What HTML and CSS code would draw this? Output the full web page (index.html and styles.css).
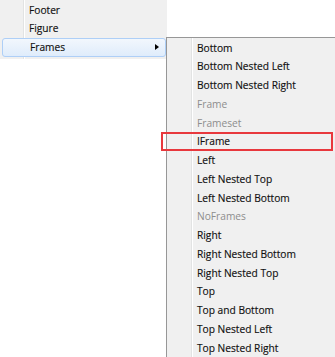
FILE: index.html
```html
<!DOCTYPE html>
<html>
<head>
<meta charset="utf-8">
<link rel="stylesheet" href="styles.css">
</head>
<body>
<div class="stage">
  <div class="menu main">
    <div class="item">Footer</div>
    <div class="item">Figure</div>
    <div class="item active">Frames<span class="arrow"></span></div>
  </div>
  <div class="menu sub">
    <div class="item">Bottom</div>
    <div class="item">Bottom Nested Left</div>
    <div class="item">Bottom Nested Right</div>
    <div class="item disabled">Frame</div>
    <div class="item disabled">Frameset</div>
    <div class="item marked">IFrame</div>
    <div class="item">Left</div>
    <div class="item">Left Nested Top</div>
    <div class="item">Left Nested Bottom</div>
    <div class="item disabled">NoFrames</div>
    <div class="item">Right</div>
    <div class="item">Right Nested Bottom</div>
    <div class="item">Right Nested Top</div>
    <div class="item">Top</div>
    <div class="item">Top and Bottom</div>
    <div class="item">Top Nested Left</div>
    <div class="item">Top Nested Right</div>
  </div>
  <div class="mark"></div>
</div>
</body>
</html>
```
FILE: styles.css
```css
html, body {
  margin: 0;
  padding: 0;
  background: #ffffff;
}
.stage {
  position: relative;
  width: 335px;
  height: 357px;
  overflow: hidden;
  font-family: "Open Sans", "Noto Sans", sans-serif;
  font-size: 10.2px;
  color: #101010;
  -webkit-text-stroke: 0.15px #101010;
}
.menu {
  background: #f0f0f0;
  display: flex;
  flex-direction: column;
  box-sizing: border-box;
}
.menu .item {
  position: relative;
  height: 18.75px;
  line-height: 18.75px;
  white-space: nowrap;
  box-sizing: border-box;
}
.main {
  width: 167px;
  padding-top: 0.5px;
  padding-bottom: 2px;
  background:
    linear-gradient(#e2e3e3, #e2e3e3) 23px 0 / 1px 100% no-repeat,
    linear-gradient(#ffffff, #ffffff) 24px 0 / 1px 100% no-repeat,
    #f0f0f0;
}
.main .item {
  padding-left: 29px;
}
.main .item.active {
  margin: 0 1px 0 2px;
  padding-left: 27px;
  border: 1px solid #aecff7;
  border-radius: 3px;
  background: linear-gradient(#f2f7fd, #dfecfb);
  line-height: 16.75px;
}
.arrow {
  position: absolute;
  right: 6px;
  top: 5px;
  width: 0;
  height: 0;
  border-top: 3.5px solid transparent;
  border-bottom: 3.5px solid transparent;
  border-left: 4px solid #000;
}
.sub {
  position: absolute;
  left: 166px;
  top: 37px;
  width: 180px;
  height: 330px;
  border-left: 1px solid #979797;
  border-top: 1px solid #979797;
  padding-top: 0.5px;
  background:
    linear-gradient(#e2e3e3, #e2e3e3) 24px 0 / 1px 100% no-repeat,
    linear-gradient(#ffffff, #ffffff) 25px 0 / 1px 100% no-repeat,
    #f0f0f0;
}
.sub .item {
  padding-left: 30px;
}
.item.disabled {
  color: #8d8d8d;
  -webkit-text-stroke: 0;
}
.mark {
  position: absolute;
  left: 161px;
  top: 132px;
  width: 172px;
  height: 19px;
  border: 2px solid #e8383d;
  box-sizing: border-box;
}
```
